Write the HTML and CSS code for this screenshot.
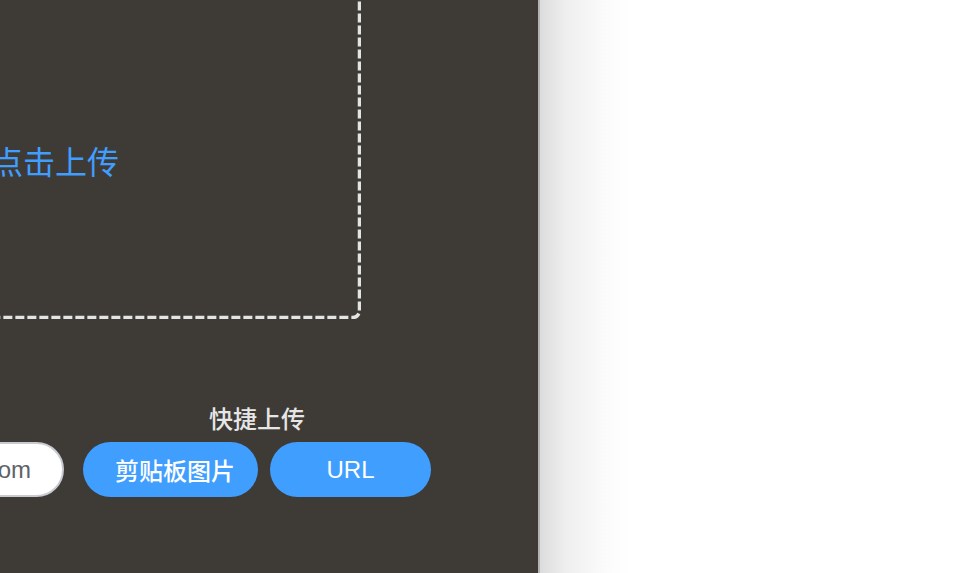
FILE: index.html
```html
<!DOCTYPE html>
<html lang="zh-CN">
<head>
<meta charset="utf-8">
<title>上传</title>
<link rel="stylesheet" href="styles.css">
</head>
<body>
<div class="page">
  <section class="panel">
    <div class="dropzone">
      <svg class="dropzone-outline" aria-hidden="true"><rect class="dropzone-rect" x="1.5" y="1.5" rx="7" ry="7"/></svg>
      <div class="dropzone-text">将文件拖到此处，或<em>点击上传</em></div>
    </div>
    <div class="quick-row">
      <div class="url-input">https://example.com</div>
      <div class="quick-group">
        <div class="quick-label">快捷上传</div>
        <div class="quick-buttons">
          <button class="btn btn-clip">剪贴板图片</button>
          <button class="btn btn-url">URL</button>
        </div>
      </div>
    </div>
  </section>
  <section class="side"></section>
</div>
</body>
</html>
```

FILE: styles.css
```css
html, body {
  margin: 0;
  padding: 0;
  height: 100%;
  overflow: hidden;
}
body {
  font-family: "Liberation Sans", "Noto Sans CJK SC", sans-serif;
}
.page {
  display: flex;
  height: 573px;
}
.panel {
  width: 538px;
  flex: none;
  background: #3e3b37;
  overflow: hidden;
  display: flex;
  flex-direction: column;
}
.dropzone {
  position: relative;
  box-sizing: border-box;
  width: 801px;
  height: 419px;
  margin-top: -100px;
  margin-left: -440px;
  flex: none;
  padding-top: 243px;
  padding-right: 242px;
  text-align: right;
}
.dropzone-outline {
  position: absolute;
  inset: 0;
  width: 100%;
  height: 100%;
  pointer-events: none;
}
.dropzone-rect {
  width: calc(100% - 3px);
  height: calc(100% - 3px);
  fill: none;
  stroke: #e4e4e4;
  stroke-width: 3.5;
  stroke-dasharray: 9 3;
}
.dropzone-text {
  font-size: 32px;
  line-height: 40px;
  color: #e0e0e0;
  white-space: nowrap;
}
.dropzone-text em {
  font-style: normal;
  color: #409eff;
}
.quick-row {
  display: flex;
  align-items: flex-end;
  margin-top: 85px;
  margin-left: -196px;
}
.url-input {
  box-sizing: border-box;
  width: 260px;
  height: 55px;
  flex: none;
  background: #fff;
  border: 2px solid #c8cad2;
  border-radius: 28px;
  font-size: 24px;
  line-height: 51px;
  color: #606266;
  text-align: right;
  padding-right: 31px;
  white-space: nowrap;
  overflow: hidden;
}
.quick-group {
  margin-left: 19px;
  display: flex;
  flex-direction: column;
  align-items: center;
}
.quick-label {
  font-size: 24px;
  line-height: 32px;
  color: #e6e6e6;
  font-weight: 500;
  margin-bottom: 6px;
}
.quick-buttons {
  display: flex;
  gap: 12px;
}
.btn {
  height: 55px;
  border: none;
  border-radius: 28px;
  background: #409eff;
  color: #fff;
  font-family: "Liberation Sans", "Noto Sans CJK SC", sans-serif;
  font-size: 24px;
  padding: 0;
}
.btn-clip {
  width: 175px;
  padding-left: 9px;
  font-weight: 500;
}
.btn-url {
  width: 161px;
}
.side {
  flex: 1;
  border-left: 2px solid #b4b4b4;
  background: linear-gradient(to right, #dcdcdc 0, #eeeeee 25px, #f8f8f8 55px, #fdfdfd 75px, #fff 95px);
}
```
